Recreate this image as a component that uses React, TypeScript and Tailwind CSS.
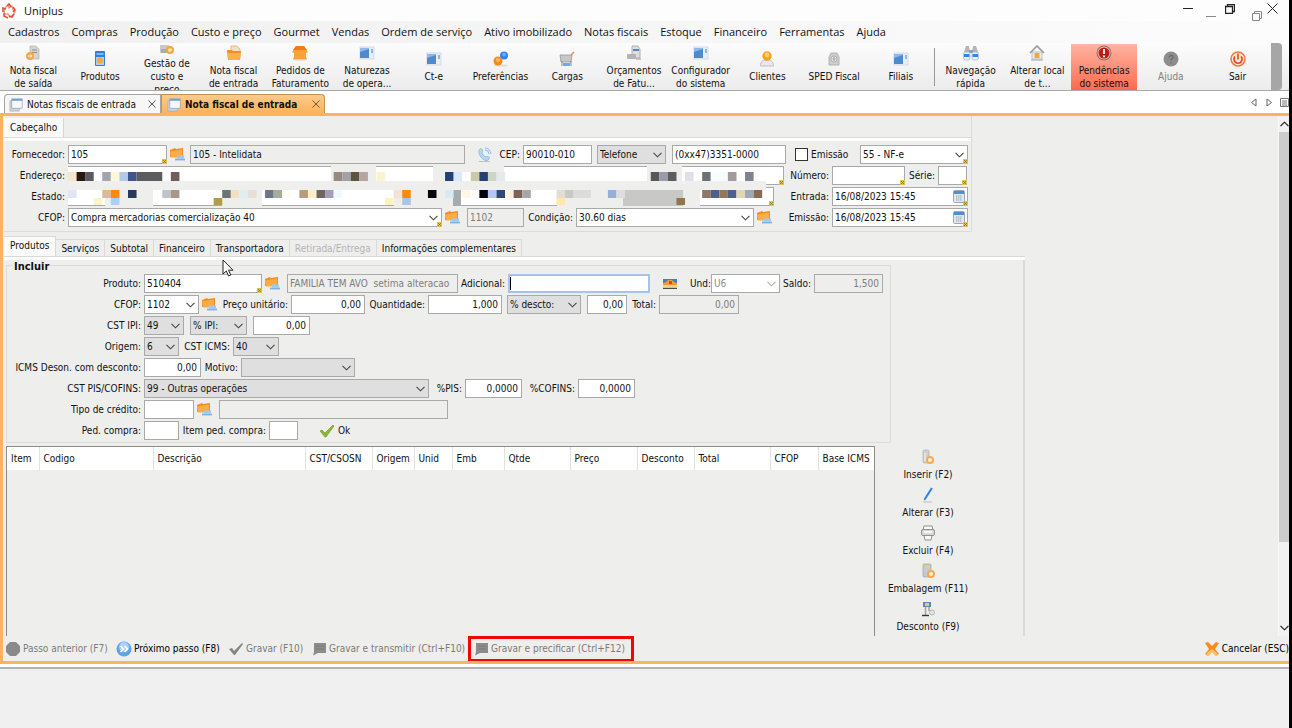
import type { ReactNode } from "react";
import clsx from "clsx";

type IconName =
  | "doc" | "device" | "coins" | "folderIn" | "house" | "window" | "prefs" | "cart" | "docPrint" | "user"
  | "sped" | "binoculars" | "home" | "alert" | "help" | "power" | "insert" | "pencil" | "printer" | "pack" | "discount";

const TOOLBAR: { icon: IconName; lines: string[]; muted?: boolean; danger?: boolean; sep?: boolean }[] = [
  { icon: "doc", lines: ["Nota fiscal", "de saída"] },
  { icon: "device", lines: ["Produtos"] },
  { icon: "coins", lines: ["Gestão de", "custo e", "preço"] },
  { icon: "folderIn", lines: ["Nota fiscal", "de entrada"] },
  { icon: "house", lines: ["Pedidos de", "Faturamento"] },
  { icon: "window", lines: ["Naturezas", "de opera..."] },
  { icon: "window", lines: ["Ct-e"] },
  { icon: "prefs", lines: ["Preferências"] },
  { icon: "cart", lines: ["Cargas"] },
  { icon: "docPrint", lines: ["Orçamentos", "de Fatu..."] },
  { icon: "window", lines: ["Configurador", "do sistema"] },
  { icon: "user", lines: ["Clientes"] },
  { icon: "sped", lines: ["SPED Fiscal"] },
  { icon: "window", lines: ["Filiais"] },
  { icon: "binoculars", lines: ["Navegação", "rápida"], sep: true },
  { icon: "home", lines: ["Alterar local", "de t..."] },
  { icon: "alert", lines: ["Pendências", "do sistema"], danger: true },
  { icon: "help", lines: ["Ajuda"], muted: true },
  { icon: "power", lines: ["Sair"] },
];

const MENU = [
  "Cadastros", "Compras", "Produção", "Custo e preço", "Gourmet", "Vendas", "Ordem de serviço",
  "Ativo imobilizado", "Notas fiscais", "Estoque", "Financeiro", "Ferramentas", "Ajuda",
];

const COLUMNS = [
  { name: "Item", width: "w-[32px]" },
  { name: "Codigo", width: "w-[114px]" },
  { name: "Descrição", width: "w-[152px]" },
  { name: "CST/CSOSN", width: "w-[67px]" },
  { name: "Origem", width: "w-[42px]" },
  { name: "Unid", width: "w-[38px]" },
  { name: "Emb", width: "w-[52px]" },
  { name: "Qtde", width: "w-[66px]" },
  { name: "Preço", width: "w-[67px]" },
  { name: "Desconto", width: "w-[57px]" },
  { name: "Total", width: "w-[76px]" },
  { name: "CFOP", width: "w-[48px]" },
  { name: "Base ICMS", width: "w-[56px]" },
];

const ACTIONS: { icon: IconName; label: string }[] = [
  { icon: "insert", label: "Inserir (F2)" },
  { icon: "pencil", label: "Alterar (F3)" },
  { icon: "printer", label: "Excluir (F4)" },
  { icon: "pack", label: "Embalagem (F11)" },
  { icon: "discount", label: "Desconto (F9)" },
];

const ICONS: Record<IconName, ReactNode> = {
  doc: (
    <>
      <path d="M5 1h6l3 3v10H5z" fill="#d4d4d4" stroke="#b3b3b3" strokeWidth=".7" />
      <path d="M7 5h5M7 7.500h5" stroke="#8f8f8f" />
      <circle cx="5" cy="11" r="4" fill="#f5a64a" />
      <path d="M3 11h4M5.500 9.500L7 11l-1.500 1.500" stroke="#fff" fill="none" />
    </>
  ),
  device: (
    <>
      <rect x="3" y="0" width="10" height="15" rx="1" fill="#2f7fe0" />
      <rect x="4.500" y="2" width="7" height="2" fill="#7fb9f5" />
      <rect x="4" y="6" width="8" height="8" fill="#a8cdf6" />
      <circle cx="8" cy="9.500" r="3" fill="#ffa62e" />
    </>
  ),
  coins: (
    <>
      <rect x="1" y="7" width="9" height="8" fill="#c9c9c9" />
      <path d="M2 12h6M2 14h6" stroke="#8e8e8e" />
      <circle cx="11" cy="12" r="4" fill="#f7a544" />
      <circle cx="11" cy="12" r="1.800" fill="#fff0d0" />
    </>
  ),
  folderIn: (
    <>
      <path d="M5 1l6 0 3 3v5H5z" fill="#f3dfc4" stroke="#dba766" strokeWidth=".7" />
      <path d="M1 5h5l1 1h8l-1 9H2z" fill="#f58f1f" />
      <path d="M1 8h14l-1.500 7h-11z" fill="#ffb04e" />
    </>
  ),
  house: (
    <>
      <ellipse cx="8" cy="14.500" rx="7" ry="1" fill="#d9d2c8" />
      <path d="M4 1h8l4 6-2 1v4l1 2H1l1-2V8L0 7z" fill="#f9a238" />
      <path d="M4 1h8l3 4H1z" fill="#ef7d1a" />
    </>
  ),
  window: (
    <>
      <rect x="1" y="2" width="14" height="12" fill="#e9eef5" stroke="#ccd6e2" strokeWidth=".8" />
      <rect x="1" y="3" width="9" height="10" fill="#8dbaea" />
      <path d="M1 13V7l9-3v9z" fill="#4d8ace" />
      <rect x="12" y="4" width="2" height="4" fill="#8fb6e4" />
    </>
  ),
  prefs: (
    <>
      <ellipse cx="8" cy="14.500" rx="7" ry="1" fill="#e0dcd6" />
      <circle cx="11" cy="4.500" r="4" fill="#2f80ec" />
      <circle cx="11" cy="3.500" r="2" fill="#69aaf8" />
      <circle cx="5" cy="10" r="4.500" fill="#f58a1c" />
      <circle cx="5" cy="9" r="2.200" fill="#ffb460" />
    </>
  ),
  cart: (
    <>
      <path d="M1 4h12l-1 7H2z" fill="#c8c8c8" stroke="#989898" strokeWidth=".8" />
      <path d="M12 4l3-3" stroke="#e08a45" strokeWidth="1.500" />
      <path d="M3 10v5M12 10v5" stroke="#8b8b8b" />
      <rect x="4" y="12" width="7" height="3" fill="#78a8e4" />
    </>
  ),
  docPrint: (
    <>
      <path d="M6 1h6l2 3v9H6z" fill="#dedede" stroke="#a2a2a2" strokeWidth=".8" />
      <rect x="7" y="4" width="6" height="2" fill="#4f88cc" />
      <rect x="1" y="9" width="9" height="5" rx="1" fill="#b4b4b4" />
      <path d="M10 14h5" stroke="#9a9a9a" />
    </>
  ),
  user: (
    <>
      <path d="M1.500 15c0-5 3-6 6.500-6s6.500 1 6.500 6z" fill="#e8e8e8" stroke="#b5b5b5" strokeWidth=".8" />
      <circle cx="8" cy="5" r="4.700" fill="#f9a11c" />
      <circle cx="8" cy="4" r="2.400" fill="#ffd070" />
    </>
  ),
  sped: (
    <>
      <path d="M5 2l6 0 2 4v8H3V6z" fill="#cecece" stroke="#a6a6a6" strokeWidth=".8" />
      <circle cx="8" cy="8" r="3" fill="#ececec" stroke="#9a9a9a" strokeWidth=".7" />
      <path d="M8 6v4M6.500 8h3" stroke="#999" />
    </>
  ),
  binoculars: (
    <>
      <path d="M3 1h3l1 6H1zM10 1h3l2 6H9z" fill="#b5b5b5" />
      <rect x="6" y="5" width="4" height="3" fill="#9a9a9a" />
      <rect x="0.500" y="7" width="6.500" height="8" rx="2" fill="#e8f0fa" stroke="#9fb5cf" strokeWidth=".7" />
      <rect x="9" y="7" width="6.500" height="8" rx="2" fill="#e8f0fa" stroke="#9fb5cf" strokeWidth=".7" />
      <rect x="1" y="9" width="5.500" height="3" fill="#2f86ea" />
      <rect x="9.500" y="9" width="5.500" height="3" fill="#2f86ea" />
    </>
  ),
  home: (
    <>
      <path d="M3 7h10v7H3z" fill="#ececec" stroke="#b0b0b0" strokeWidth=".7" />
      <path d="M1 8l7-7 7 7" fill="none" stroke="#9a9a9a" strokeWidth="1.600" />
      <rect x="5.500" y="8" width="5" height="5" fill="#f8a53a" />
      <path d="M2 15h12" stroke="#a5a5a5" />
    </>
  ),
  alert: (
    <>
      <circle cx="8" cy="8" r="7.500" fill="#8e6a66" />
      <circle cx="8" cy="8" r="6.500" fill="#e6c0bb" />
      <circle cx="8" cy="8" r="5.500" fill="#c01c14" />
      <path d="M8 4v5M8 10.500v1.800" stroke="#fff" strokeWidth="1.800" />
    </>
  ),
  help: (
    <>
      <circle cx="8" cy="8" r="7.500" fill="#8d8d8d" />
      <path d="M6 6.500c0-3 4.500-2.500 4 0-.3 1.200-2 1.200-2 3M8 11v1.500" stroke="#6c6c6c" strokeWidth="1.300" fill="none" />
    </>
  ),
  power: (
    <>
      <circle cx="8" cy="8" r="7" fill="#fde4d2" stroke="#ee7a3c" strokeWidth="1.500" />
      <path d="M5 5.500a4 4 0 1 0 6 0" fill="none" stroke="#dd4a1c" strokeWidth="1.800" />
      <path d="M8 2.500v6" stroke="#dd4a1c" strokeWidth="1.600" />
    </>
  ),
  insert: (
    <>
      <rect x="3" y="1" width="6" height="13" rx="1.500" fill="#d0d0d0" stroke="#adadad" strokeWidth=".7" />
      <path d="M5 4v8" stroke="#f2f2f2" />
      <circle cx="10" cy="11" r="4" fill="#f6a94e" />
      <circle cx="10" cy="11" r="2" fill="#fff3dc" />
    </>
  ),
  pencil: (
    <>
      <path d="M11 .5l1.800 1-7 11-2 1 .4-2.200z" fill="#2f86dc" />
      <path d="M3 15h9" stroke="#bdbdbd" />
    </>
  ),
  printer: (
    <>
      <path d="M4 1h8l1 4H3zM4 10h8l-1 5H5z" fill="#fafafa" stroke="#777" strokeWidth=".8" />
      <rect x="1.500" y="4.500" width="13" height="6" rx="1.500" fill="#d9d9d9" stroke="#808080" strokeWidth=".8" />
      <path d="M4 7h8" stroke="#fff" strokeWidth="1.500" />
    </>
  ),
  pack: (
    <>
      <rect x="3" y="1" width="8" height="13" rx="1" fill="#c4c9d2" stroke="#a4a4a4" strokeWidth=".7" />
      <rect x="5" y="2" width="4" height="3" fill="#f4c878" />
      <circle cx="11" cy="11" r="4" fill="#f6a94e" />
      <circle cx="11" cy="11" r="2" fill="#fff3dc" />
    </>
  ),
  discount: (
    <>
      <rect x="3" y="1" width="8" height="5" fill="#5e86bd" />
      <rect x="5" y="2" width="4" height="3" fill="#f7c758" />
      <path d="M5.500 6v8M9 6v4" stroke="#a3a3a3" strokeWidth="1.500" />
      <path d="M2 14.500h7" stroke="#333" strokeWidth="1.400" />
      <circle cx="12" cy="11.500" r="2.500" fill="#e4e4e4" stroke="#a0a0a0" strokeWidth=".7" />
    </>
  ),
};

function Icon({ name }: { name: IconName }) {
  return <svg viewBox="0 0 16 16" className="h-4 w-4 shrink-0">{ICONS[name]}</svg>;
}

function Chevron({ className }: { className?: string }) {
  return (
    <svg viewBox="0 0 9 6" className={clsx("pointer-events-none h-[6px] w-[9px]", className)}>
      <path d="M.5.8l4 4 4-4" fill="none" stroke="currentColor" strokeWidth="1.100" />
    </svg>
  );
}

// little yellow mark on required fields
function Required() {
  return (
    <svg viewBox="0 0 5 5" className="pointer-events-none absolute right-0 bottom-0 h-[5px] w-[5px]">
      <rect width="5" height="5" fill="#e3bf4c" />
      <path d="M1 1l3 3M4 1L1 4" stroke="#8d7220" strokeWidth=".8" />
    </svg>
  );
}

function Label({ htmlFor, width, children }: { htmlFor: string; width: string; children: ReactNode }) {
  return (
    <label htmlFor={htmlFor} className={clsx("shrink-0 whitespace-nowrap pr-[3px] text-right", width)}>
      {children}
    </label>
  );
}

interface FieldProps {
  id: string;
  width: string;
  value?: string;
  right?: boolean;
  locked?: boolean;
  muted?: boolean;
  required?: boolean;
  focused?: boolean;
  label?: string;
  children?: ReactNode;
}

function Field({ id, width, value = "", right, locked, muted, required, focused, label, children }: FieldProps) {
  return (
    <span className={clsx("relative flex h-[19px] shrink-0", width)}>
      <input
        id={id}
        aria-label={label}
        defaultValue={value}
        readOnly={locked}
        className={clsx(
          "h-full w-full min-w-0 border px-[2px] outline-none",
          focused ? "border-2 border-[#a5c3ee]" : "border-[#a9a9a9]",
          right && "pr-[3px] text-right",
          locked ? "bg-[#eeeeed]" : "bg-white",
          muted && "text-[#7d7d7d]",
        )}
      />
      {focused && <span className="absolute top-[3px] left-[2px] h-[13px] w-px bg-black" />}
      {children}
      {required && <Required />}
    </span>
  );
}

interface PickProps {
  id: string;
  width: string;
  value?: string;
  gray?: boolean;
  muted?: boolean;
  required?: boolean;
  label?: string;
}

function Pick({ id, width, value = "", gray, muted, required, label }: PickProps) {
  return (
    <span className={clsx("relative flex h-[19px] shrink-0", width)}>
      <select
        id={id}
        aria-label={label}
        className={clsx(
          "h-full w-full min-w-0 appearance-none border border-[#a9a9a9] px-[2px] outline-none",
          gray ? "bg-[#dfdfdf]" : "bg-white",
          muted && "text-[#8d8d8d]",
        )}
      >
        <option>{value}</option>
      </select>
      <Chevron className={clsx("absolute top-[7px] right-[4px]", muted ? "text-[#aaa]" : "text-[#444]")} />
      {required && <Required />}
    </span>
  );
}

function FolderButton({ width, label }: { width: string; label: string }) {
  return (
    <button aria-label={label} className={clsx("flex shrink-0 pl-[2px]", width)}>
      <svg viewBox="0 0 16 15" className="h-[15px] w-4 shrink-0">
        <path d="M1 3l5-2 1 1 7-1v9H1z" fill="#f58c1e" />
        <path d="M1 4.500l12-2v8H2z" fill="#ffab46" />
        <rect x="8" y="8.500" width="7" height="3" fill="#9ec9f6" />
        <path d="M6 12.500h10" stroke="#7fb0e8" strokeWidth="1.800" />
      </svg>
    </button>
  );
}

function Calendar() {
  return (
    <svg viewBox="0 0 12 13" className="absolute top-[3px] right-[3px] h-[13px] w-3">
      <rect x=".5" y=".5" width="11" height="12" rx="1" fill="#e4e8ec" stroke="#98a8b8" />
      <rect x="1" y="1" width="10" height="3" fill="#4e8fd2" />
      <path d="M3 6h6M3 8h6M3 10h6" stroke="#8e9aa8" strokeDasharray="1.300 .8" />
    </svg>
  );
}

function WindowIcon() {
  return (
    <svg viewBox="0 0 16 16" className="h-[15px] w-[15px] shrink-0">
      <path d="M1 4h10v11H1z" fill="#d5d5d5" stroke="#a5a5a5" strokeWidth=".7" />
      <rect x="3" y="2" width="11" height="10" fill="#f6f9fd" stroke="#8ba5c4" strokeWidth=".8" />
      <rect x="3" y="2" width="11" height="2" fill="#6f9fd4" />
    </svg>
  );
}

const CELL = 8.57;

type Block = [start: number, count: number, color: string];

const STREET_BLOCKS: Block[] = [
  [0, 1, "#f6e6cc"], [1, 1, "#2a1712"], [2, 1, "#5b5a60"], [4, 1, "#a1a4ae"], [5, 1, "#fcf7d6"], [6, 1, "#b3c9e8"],
  [7, 1, "#40568a"], [8, 3, "#5c5c5e"], [12, 1, "#6e5d5a"], [31, 1, "#978b80"], [32, 1, "#a3a1a5"], [33, 1, "#5d5440"],
  [34, 1, "#b8a5a2"], [36, 1, "#fbf5cf"], [44, 1, "#24406f"], [45, 1, "#dbe7fb"], [46, 1, "#fff"], [47, 1, "#ccc9a6"],
  [48, 1, "#24406c"], [49, 1, "#ccd6c8"], [50, 1, "#e4e9ea"], [68, 1, "#585858"], [69, 1, "#9b9ba8"], [70, 1, "#5d5d5f"],
  [72, 1, "#e0e0ec"], [74, 1, "#6f7274"], [75, 2, "#f8fcfe"], [77, 1, "#a39a9b"], [79, 1, "#7e838e"],
];

const STATE_BLOCKS: Block[] = [
  [0, 1, "#e2e4f2"], [4, 1, "#d9bb98"], [5, 1, "#ff8a0a"], [7, 1, "#28395a"], [11, 1, "#c0c4c9"], [12, 1, "#a9988a"],
  [18, 1, "#6c7474"], [19, 1, "#f3dfc4"], [20, 1, "#dfeef2"], [21, 1, "#e8ddd8"], [23, 1, "#6c7686"], [24, 1, "#a5ac9c"],
  [25, 1, "#fdfdf0"], [27, 1, "#bb9a7c"], [28, 1, "#fbeec8"], [29, 1, "#716362"], [30, 1, "#a49cb8"], [31, 1, "#eefafc"],
  [38, 1, "#f2e2d8"], [39, 1, "#ff8a0a"], [42, 1, "#06080f"], [44, 1, "#d7eaf2"], [46, 1, "#fff6e4"], [48, 1, "#02020e"],
  [49, 1, "#b6c6f0"], [50, 1, "#2f4a72"], [51, 1, "#fff3e0"], [52, 1, "#7d6356"], [53, 1, "#a6a6a4"], [57, 1, "#e3ded0"],
  [58, 1, "#c8c8c6"], [59, 2, "#dcdcdc"], [63, 1, "#97afd8"], [64, 1, "#dddddd"], [74, 1, "#8f7763"], [75, 1, "#4c6288"],
  [76, 1, "#93785a"], [77, 1, "#4f618a"], [78, 1, "#e0d5b5"], [79, 1, "#9aa8b8"], [80, 1, "#8a6a50"],
];

const STATE_LOWER: Block[] = [
  [3, 1, "#fdf5c8"], [5, 1, "#a8d2f5"], [17, 1, "#b39b4e"], [37, 1, "#fdf3c0"], [39, 1, "#aac6e2"],
  [57, 1, "#ffe8a8"], [71, 1, "#8e7848"],
];

function blocks(list: Block[], y: number, h: number) {
  return list.map(([start, count, color]) => (
    <rect key={start} x={start * CELL} y={y} width={count * CELL} height={h} fill={color} />
  ));
}

// pixelated private data
function StreetMosaic() {
  return (
    <svg viewBox="0 0 716 19" className="absolute inset-0 h-[19px] w-[716px]">
      <rect y="15" width="698" height="4" fill="#efefee" />
      <rect y="1" width="1" height="14" fill="#fff" />
      <rect x="263" width="45" height="19" fill="#eeeeed" />
      <rect x="365" width="71" height="19" fill="#eeeeed" />
      <rect x="579" width="35" height="19" fill="#eeeeed" />
      {blocks(STREET_BLOCKS, 6, 9)}
    </svg>
  );
}

function StateMosaic() {
  return (
    <svg viewBox="0 0 706 19" className="absolute inset-0 h-[19px] w-[706px]">
      <rect width="698" height="3" fill="#efefee" />
      <rect y="3" width="1" height="15" fill="#fff" />
      <rect x="37" width="48" height="19" fill="#eeeeed" />
      <rect x="154" width="40" height="19" fill="#eeeeed" />
      <rect x="326" width="59" height="19" fill="#eeeeed" />
      <rect x="385" y="3" width="8" height="16" fill="#a6abb0" />
      <rect x="489" width="143" height="19" fill="#eeeeed" />
      <rect x="555" y="3" width="60" height="16" fill="#c8c8c6" />
      {blocks(STATE_BLOCKS, 3, 8)}
      {blocks(STATE_LOWER, 11, 7)}
    </svg>
  );
}

function TitleBar() {
  return (
    <header className="flex h-[21px] items-center bg-[#fdfdfd] pl-[2px]">
      <svg viewBox="0 0 14 16" className="h-4 w-[14px]">
        <path d="M3 5l3-3 1 3 3-2 1 4 2 2-2 3-3 2-2-3-4 0z" fill="#fff" stroke="#f09a86" strokeWidth="1.400" />
        <path d="M1 9V5l3 1M5 3l2-2 2 3M11 4l2 3-2 2M12 11l-2 3-3-1M6 15l-4-2 0-3" fill="none" stroke="#e5523c" strokeWidth="1.600" />
      </svg>
      <h1 className="ml-2 font-['Open_Sans',sans-serif] text-[11px]">Uniplus</h1>
      <div className="mb-1 ml-auto flex items-center gap-[9px] pr-[11px]">
        <button aria-label="Minimizar" className="mr-1 h-px w-[10px] bg-[#222]" />
        <button aria-label="Minimizar documento" className="mt-[15px] h-px w-[10px] bg-[#888]" />
        <button aria-label="Restaurar">
          <svg viewBox="0 0 10 10" className="h-[10px] w-[10px]">
            <path d="M.5 2.500h7v7h-7zM2.500 2.500v-2h7v7h-2" fill="none" stroke="#222" strokeWidth="1.300" />
          </svg>
        </button>
        <button aria-label="Restaurar documento" className="mt-[15px] ml-2">
          <svg viewBox="0 0 10 10" className="h-[10px] w-[10px]">
            <path d="M.5 2.500h7v7h-7zM2.500 2.500v-2h7v7h-2" fill="none" stroke="#888" />
          </svg>
        </button>
        <button aria-label="Fechar" className="-ml-1">
          <svg viewBox="0 0 11 11" className="h-[11px] w-[11px]">
            <path d="M.5.500l10 10M10.500.500l-10 10" stroke="#222" />
          </svg>
        </button>
      </div>
    </header>
  );
}

function Toolbar() {
  return (
    <div className="flex h-12 border-b border-[#a9a9a9] bg-linear-to-b from-[#fcfcfc] to-[#ececec]">
      <div className="flex flex-1 pt-px">
        {TOOLBAR.map(({ icon, lines, muted, danger, sep }) => (
          <div key={lines.join(" ")} className={clsx("flex min-w-0 flex-1 items-stretch", sep && "relative ml-[3px]")}>
            {sep && <span className="absolute top-1 bottom-1 -left-[3px] w-px bg-[#999]" />}
            <button
              className={clsx(
                "flex w-full flex-col items-center justify-center overflow-hidden leading-[13px] whitespace-nowrap",
                muted && "text-[#808080]",
                danger && "bg-linear-to-b from-[#ffb3a2] to-[#fb6a4e]",
              )}
            >
              <Icon name={icon} />
              <span className="mt-[3px]">
                {lines.map((line) => (
                  <span key={line} className="block">{line}</span>
                ))}
              </span>
            </button>
          </div>
        ))}
      </div>
      <div className="mr-[7px] w-[11px] rounded-r bg-[#a6a6a6]" />
    </div>
  );
}

function DocumentTabs() {
  return (
    <div className="flex h-[22px] items-end bg-white pl-1">
      <div className="flex h-[19px] w-[157px] items-center rounded-tl border border-b-0 border-[#a5a5a5] bg-[#f7f7f7] pl-1">
        <WindowIcon />
        <button className="ml-[3px] whitespace-nowrap">Notas fiscais de entrada</button>
        <button aria-label="Fechar aba Notas fiscais de entrada" className="mr-1 ml-auto">
          <svg viewBox="0 0 8 8" className="h-2 w-2"><path d="M.5.500l7 7M7.500.500l-7 7" stroke="#555" /></svg>
        </button>
      </div>
      <div className="flex h-[19px] w-[164px] items-center rounded-tr border border-b-0 border-[#c39352] bg-linear-to-b from-[#fdca8b] to-[#fbb35c] pl-[5px]">
        <WindowIcon />
        <button className="ml-[3px] font-bold whitespace-nowrap">Nota fiscal de entrada</button>
        <button aria-label="Fechar aba Nota fiscal de entrada" className="mr-1 ml-auto">
          <svg viewBox="0 0 8 8" className="h-2 w-2"><path d="M.5.500l7 7M7.500.500l-7 7" stroke="#7a5a30" /></svg>
        </button>
      </div>
      <div className="mb-[6px] ml-auto flex gap-[7px]">
        <button aria-label="Aba anterior">
          <svg viewBox="0 0 8 9" className="h-[9px] w-2"><path d="M6 1L1.500 4.500 6 8z" fill="none" stroke="#666" /></svg>
        </button>
        <button aria-label="Próxima aba">
          <svg viewBox="0 0 8 9" className="h-[9px] w-2"><path d="M2 1l4.500 3.500L2 8z" fill="none" stroke="#666" /></svg>
        </button>
        <button aria-label="Lista de abas">
          <svg viewBox="0 0 9 9" className="h-[9px] w-[9px]"><path d="M.5.500h8v8h-8zM2 3h5M2 5h5M2 7h5" fill="none" stroke="#777" /></svg>
        </button>
      </div>
    </div>
  );
}

function HeaderForm() {
  return (
    <div className="w-[968px] border-r border-b border-[#dcdcdc]">
      <div className="flex h-[22px] items-end border-b border-[#dcdcdc]">
        <button className="h-[19px] border-r border-[#d5d5d5] bg-[#fafafa] px-[6px]">Cabeçalho</button>
      </div>
      <div className="h-[3px] bg-white" />
      <div className="flex flex-col gap-[2px] pt-1 pb-1 pl-px">
        <div className="flex items-center">
          <Label htmlFor="fornecedor" width="w-[63px]">Fornecedor:</Label>
          <Field id="fornecedor" width="w-[99px]" value="105" required />
          <FolderButton width="w-[23px]" label="Buscar fornecedor" />
          <Field id="fornecedorNome" label="Nome do fornecedor" width="w-[275px]" value="105 - Intelidata" locked />
          <button aria-label="Ligar" className="ml-3 flex w-4">
            <svg viewBox="0 0 15 15" className="h-[15px] w-[15px]">
              <path d="M3 2c2-1 3 1 2 3 0 3 2 4 4 5 2-1 4 0 3 2-2 3-6 1-8-2S1 4 3 2z" fill="#b7d8f5" stroke="#7fb2e2" strokeWidth=".8" />
              <path d="M8 3a4 4 0 0 1 4 4M8 1a6 6 0 0 1 6 6" fill="none" stroke="#8dbdec" />
              <path d="M2 14.500h11" stroke="#c2c2c2" />
            </svg>
          </button>
          <Label htmlFor="cep" width="w-[30px]">CEP:</Label>
          <Field id="cep" width="w-[69px]" value="90010-010" />
          <span className="w-[5px]" />
          <Pick id="tipoFone" label="Tipo de telefone" width="w-[69px]" value="Telefone" gray />
          <span className="w-[6px]" />
          <Field id="fone" label="Telefone" width="w-[114px]" value="(0xx47)3351-0000" />
          <input id="emissaoPropria" type="checkbox" className="ml-[9px] h-[13px] w-[13px] appearance-none border border-[#333] bg-white" />
          <label htmlFor="emissaoPropria" className="w-[52px] pl-[3px]">Emissão</label>
          <Pick id="modelo" label="Modelo" width="w-[108px]" value="55 - NF-e" required />
        </div>
        <div className="flex items-center">
          <Label htmlFor="endereco" width="w-[63px]">Endereço:</Label>
          <Field id="endereco" width="w-[716px]" required><StreetMosaic /></Field>
          <Label htmlFor="numero" width="w-[48px]">Número:</Label>
          <Field id="numero" width="w-[73px]" required />
          <Label htmlFor="serie" width="w-[33px]">Série:</Label>
          <Field id="serie" width="w-[29px]" required />
        </div>
        <div className="flex items-center">
          <Label htmlFor="estado" width="w-[63px]">Estado:</Label>
          <Field id="estado" width="w-[706px]" required><StateMosaic /></Field>
          <Label htmlFor="entrada" width="w-[58px]">Entrada:</Label>
          <Field id="entrada" width="w-[136px]" value="16/08/2023 15:45" required><Calendar /></Field>
        </div>
        <div className="flex items-center">
          <Label htmlFor="cfopNota" width="w-[63px]">CFOP:</Label>
          <Pick id="cfopNota" width="w-[374px]" value="Compra mercadorias comercialização 40" required />
          <FolderButton width="w-[25px]" label="Buscar CFOP" />
          <Field id="cfopCodigo" label="Código CFOP" width="w-[57px]" value="1102" locked muted />
          <Label htmlFor="condicao" width="w-[52px]">Condição:</Label>
          <Pick id="condicao" width="w-[178px]" value="30.60 dias" />
          <FolderButton width="w-[21px]" label="Buscar condição" />
          <Label htmlFor="emissao" width="w-[57px]">Emissão:</Label>
          <Field id="emissao" width="w-[136px]" value="16/08/2023 15:45" required><Calendar /></Field>
        </div>
      </div>
    </div>
  );
}

function ItemForm() {
  return (
    <fieldset className="relative ml-[2px] w-[885px] border border-[#dcdcdc] pt-[8px] pb-[2px]">
      <legend className="absolute -top-[6px] left-[6px] bg-[#eeeeed] px-px text-[11px] leading-[14px] font-bold">Incluir</legend>
      <div className="flex flex-col gap-[2px]">
        <div className="flex items-center">
          <Label htmlFor="produto" width="w-[137px]">Produto:</Label>
          <Field id="produto" width="w-[118px]" value="510404" required />
          <FolderButton width="w-[25px]" label="Buscar produto" />
          <Field id="produtoNome" label="Descrição do produto" width="w-[171px]" value="FAMILIA TEM AVO  setima alteracao" locked muted />
          <Label htmlFor="adicional" width="w-[50px]">Adicional:</Label>
          <Field id="adicional" width="w-[142px]" focused />
          <button aria-label="Grade" className="flex w-[40px] justify-center">
            <svg viewBox="0 0 14 10" className="h-[10px] w-[14px]">
              <rect width="14" height="6" x="0" fill="#3c7fd0" />
              <path d="M0 4l3-1 2-2h4l2 2 3 1v2H0z" fill="#f49a2e" />
              <path d="M6 2h3v3H6z" fill="#d04a2a" />
              <path d="M0 7h14" stroke="#f4c86a" strokeWidth="1.500" />
              <path d="M0 9.300h14" stroke="#222" />
            </svg>
          </button>
          <Label htmlFor="und" width="w-[21px]">Und:</Label>
          <Pick id="und" width="w-[69px]" value="U6" muted />
          <Label htmlFor="saldo" width="w-[34px]">Saldo:</Label>
          <Field id="saldo" width="w-[69px]" value="1,500" right locked muted />
        </div>
        <div className="flex items-center">
          <Label htmlFor="cfopItem" width="w-[137px]">CFOP:</Label>
          <Pick id="cfopItem" width="w-[55px]" value="1102" />
          <FolderButton width="w-[18px]" label="Buscar CFOP do item" />
          <Label htmlFor="preco" width="w-[74px]">Preço unitário:</Label>
          <Field id="preco" width="w-[74px]" value="0,00" right />
          <Label htmlFor="quantidade" width="w-[63px]">Quantidade:</Label>
          <Field id="quantidade" width="w-[74px]" value="1,000" right />
          <span className="w-[5px]" />
          <Pick id="tipoDesconto" label="Tipo de desconto" width="w-[74px]" value="% descto:" gray />
          <span className="w-[6px]" />
          <Field id="desconto" label="Desconto" width="w-[40px]" value="0,00" right />
          <Label htmlFor="total" width="w-[32px]">Total:</Label>
          <Field id="total" width="w-[80px]" value="0,00" right locked muted />
        </div>
        <div className="flex items-center">
          <Label htmlFor="cstIpi" width="w-[137px]">CST IPI:</Label>
          <Pick id="cstIpi" width="w-[40px]" value="49" gray />
          <span className="w-[6px]" />
          <Pick id="tipoIpi" label="Tipo de IPI" width="w-[57px]" value="% IPI:" gray />
          <span className="w-[6px]" />
          <Field id="ipi" label="IPI" width="w-[57px]" value="0,00" right />
        </div>
        <div className="flex items-center">
          <Label htmlFor="origem" width="w-[137px]">Origem:</Label>
          <Pick id="origem" width="w-[35px]" value="6" gray />
          <Label htmlFor="cstIcms" width="w-[54px]">CST ICMS:</Label>
          <Pick id="cstIcms" width="w-[46px]" value="40" gray />
        </div>
        <div className="flex items-center">
          <Label htmlFor="icmsDeson" width="w-[137px]">ICMS Deson. com desconto:</Label>
          <Field id="icmsDeson" width="w-[57px]" value="0,00" right />
          <Label htmlFor="motivo" width="w-[40px]">Motivo:</Label>
          <Pick id="motivo" width="w-[114px]" gray />
        </div>
        <div className="flex items-center">
          <Label htmlFor="cstPis" width="w-[137px]">CST PIS/COFINS:</Label>
          <Pick id="cstPis" width="w-[285px]" value="99 - Outras operações" gray />
          <Label htmlFor="pis" width="w-[36px]">%PIS:</Label>
          <Field id="pis" width="w-[57px]" value="0,0000" right />
          <Label htmlFor="cofins" width="w-[56px]">%COFINS:</Label>
          <Field id="cofins" width="w-[57px]" value="0,0000" right />
        </div>
        <div className="flex items-center">
          <Label htmlFor="tipoCredito" width="w-[137px]">Tipo de crédito:</Label>
          <Field id="tipoCredito" width="w-[50px]" />
          <FolderButton width="w-[25px]" label="Buscar tipo de crédito" />
          <Field id="tipoCreditoNome" label="Descrição do tipo de crédito" width="w-[229px]" locked />
        </div>
        <div className="flex items-center">
          <Label htmlFor="pedCompra" width="w-[137px]">Ped. compra:</Label>
          <Field id="pedCompra" width="w-[35px]" />
          <Label htmlFor="itemPed" width="w-[90px]">Item ped. compra:</Label>
          <Field id="itemPed" width="w-[29px]" />
          <button className="ml-[21px] flex items-center gap-[3px]">
            <svg viewBox="0 0 16 14" className="h-[14px] w-4">
              <path d="M1 7l2-1 3 3 8-8 1 1-8 11H6z" fill="#8fb535" stroke="#6d9420" strokeWidth=".6" />
            </svg>
            Ok
          </button>
        </div>
      </div>
    </fieldset>
  );
}

const ITEM_TABS = ["Produtos", "Serviços", "Subtotal", "Financeiro", "Transportadora", "Retirada/Entrega", "Informações complementares"];

function ItemsPanel() {
  return (
    <section className="flex w-[1021px] flex-1 flex-col">
      <div className="mt-[4px] flex h-[21px] items-end border-b border-[#d9d9d9]">
        {ITEM_TABS.map((tab, i) => (
          <button
            key={tab}
            disabled={tab === "Retirada/Entrega"}
            className={clsx(
              "border-t border-r border-[#dadada] whitespace-nowrap disabled:text-[#b4b4b4]",
              i === 0 ? "h-5 bg-[#fafafa] px-[6px] pb-[2px]" : "h-[17px] px-[5px]",
            )}
          >
            {tab}
          </button>
        ))}
      </div>
      <div className="h-[3px] bg-white" />
      <div className="flex flex-1 flex-col border-r-2 border-[#dadada] pt-[5px]">
        <ItemForm />
        <div className="mt-[3px] flex flex-1">
          <div className="ml-[2px] border border-b-0 border-[#8c8c8c]">
            <table className="w-[867px] table-fixed border-collapse">
              <thead>
                <tr className="h-[23px] bg-white">
                  {COLUMNS.map(({ name, width }) => (
                    <th key={name} className={clsx("overflow-hidden border-r border-[#e2e2e2] pl-1 text-left font-normal whitespace-nowrap last:border-r-0", width)}>
                      {name}
                    </th>
                  ))}
                </tr>
              </thead>
            </table>
          </div>
          <div className="flex w-[106px] flex-col items-center">
            {ACTIONS.map(({ icon, label }) => (
              <button key={label} className="flex h-[38px] flex-col items-center pt-[3px] whitespace-nowrap">
                <Icon name={icon} />
                <span className="mt-[2px]">{label}</span>
              </button>
            ))}
          </div>
        </div>
      </div>
    </section>
  );
}

function StampIcon() {
  return (
    <svg viewBox="0 0 15 14" className="h-[14px] w-[15px] shrink-0">
      <path d="M2 1h12v10H6l-5 2.500L2 10z" fill="#8c8c8c" />
      <path d="M4 4h8M4 7h8" stroke="#7a7a7a" />
    </svg>
  );
}

function StepBar() {
  return (
    <div className="flex h-[25px] items-center overflow-hidden pl-[2px] whitespace-nowrap text-[#7b7b7b]">
      <button className="flex w-[111px] shrink-0 items-center gap-[2px]">
        <svg viewBox="0 0 16 16" className="h-4 w-4 shrink-0"><path d="M5 1h6l4 4v6l-4 4H5l-4-4V5z" fill="#8a8a8a" /></svg>
        Passo anterior (F7)
      </button>
      <button className="flex w-[112px] shrink-0 items-center gap-[2px] text-black">
        <svg viewBox="0 0 16 16" className="h-4 w-4 shrink-0">
          <circle cx="8" cy="8" r="7.500" fill="#5ea3e6" />
          <circle cx="8" cy="6" r="5" fill="#a8d2f8" />
          <path d="M4.500 5l3 3-3 3M8.500 5l3 3-3 3" fill="none" stroke="#fff" strokeWidth="1.600" />
        </svg>
        Próximo passo (F8)
      </button>
      <button className="flex w-[84px] shrink-0 items-center gap-[2px]">
        <svg viewBox="0 0 16 14" className="h-[14px] w-4 shrink-0"><path d="M1 7l3-1 2 3 8-8 1 1-8 11H6z" fill="#858585" /></svg>
        Gravar (F10)
      </button>
      <button className="flex w-[156px] shrink-0 items-center gap-[2px]">
        <StampIcon />
        Gravar e transmitir (Ctrl+F10)
      </button>
      <button className="flex h-[26px] w-[166px] shrink-0 items-center gap-[2px] border-[3px] border-[#f30505] pl-[3px]">
        <StampIcon />
        Gravar e precificar (Ctrl+F12)
      </button>
      <button className="ml-auto flex shrink-0 items-center gap-[2px] text-black">
        <svg viewBox="0 0 16 16" className="h-4 w-4 shrink-0">
          <path d="M1 2l3-1 4 4 4-4 3 1-4 6 4 5-3 2-4-4-4 4-3-2 4-5z" fill="#f78c1e" />
          <path d="M8 8l4 3 2 3-2 1-4-4-4 4-2-1 2-3z" fill="#ffc268" />
        </svg>
        Cancelar (ESC)
      </button>
    </div>
  );
}

function ScrollBar() {
  return (
    <div className="flex w-[11px] flex-col items-center border-l border-[#f8f8f8] bg-[#f1f1f1]">
      <button aria-label="Rolar para cima" className="flex h-4 items-center"><Chevron className="rotate-180" /></button>
      <div className="w-full flex-1"><div className="h-[84%] bg-[#cccccc]" /></div>
      <button aria-label="Rolar para baixo" className="flex h-4 items-center"><Chevron /></button>
    </div>
  );
}

export default function App() {
  return (
    <div className="relative flex min-h-screen flex-col overflow-hidden border-r-[3px] border-black bg-[#f0f0f0] font-['DejaVu_Sans_Condensed',sans-serif] text-[10px] leading-[15px] text-[#111]">
      <TitleBar />
      <nav className="flex h-[22px] items-center gap-3 bg-linear-to-r from-[#f0f0f0] to-[#fcfcfc] pb-[2px] pl-2 font-['Open_Sans',sans-serif] text-[11px] whitespace-nowrap">
        {MENU.map((item) => <button key={item}>{item}</button>)}
      </nav>
      <Toolbar />
      <DocumentTabs />
      <main className="flex flex-1 flex-col border-y-[3px] border-l-[3px] border-[#fab35f] bg-[#eeeeed]">
        <div className="flex flex-1">
          <div className="flex flex-1 flex-col pl-px">
            <HeaderForm />
            <ItemsPanel />
          </div>
          <ScrollBar />
        </div>
        <StepBar />
      </main>
      <footer className="h-16 border-t-[3px] border-white">
        <div className="h-[2px] bg-[#b2b2b0]" />
      </footer>
      <svg viewBox="0 0 12 18" className="pointer-events-none absolute top-[259px] left-[222px] h-[18px] w-3">
        <path d="M1 1v14l3.300-3 2.300 5 2.200-1-2.300-4.800H11z" fill="#fff" stroke="#222" />
      </svg>
    </div>
  );
}
